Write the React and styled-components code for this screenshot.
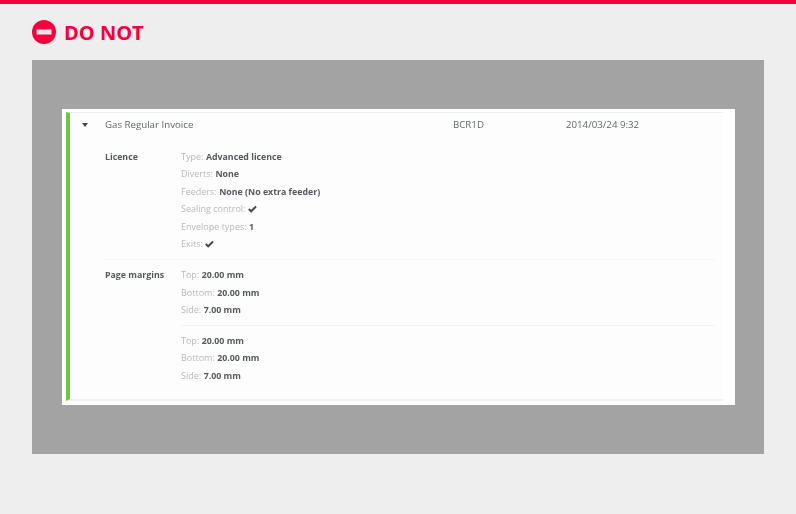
import React from "react"
import styled, { createGlobalStyle } from "styled-components"

const GlobalStyle = createGlobalStyle`
  html, body {
    margin: 0;
    padding: 0;
    background: #eeeeee;
    font-family: "Open Sans", "Liberation Sans", sans-serif;
  }
`

const Page = styled.div`
  width: 796px;
  height: 514px;
  box-sizing: border-box;
  border-top: 4px solid #f5003d;
  padding: 16px 32px 0;
  overflow: hidden;
`

const Heading = styled.div`
  display: flex;
  align-items: center;
  gap: 8px;
  height: 24px;
  margin-bottom: 16px;
  color: #f5003d;
  font-size: 20px;
  font-weight: 700;
`

const Stage = styled.div`
  height: 394px;
  box-sizing: border-box;
  background: #a3a3a3;
  padding: 49px 29px 0 30px;
`

const Shot = styled.div`
  height: 296px;
  box-sizing: border-box;
  background: #ffffff;
  padding: 3px 12px 4px 4px;
  filter: blur(0.5px);
`

const Card = styled.div`
  height: 100%;
  box-sizing: border-box;
  background: #fdfdfd;
  border-top: 1px solid #efefef;
  border-bottom: 2px solid #f1f1f1;
  border-left: 4px solid #6cc644;
  padding-left: 12px;
  color: #55595d;
  font-size: 9px;
`

const TopRow = styled.div`
  display: grid;
  grid-template-columns: 23px 348px 113px 1fr;
  align-items: center;
  height: 23px;
  font-size: 9.7px;
  color: #63676a;
`

const Caret = styled.span`
  width: 0;
  height: 0;
  margin-top: 1px;
  border-left: 3.5px solid transparent;
  border-right: 3.5px solid transparent;
  border-top: 4px solid #444;
`

const Section = styled.div`
  display: grid;
  grid-template-columns: 76px 1fr;
  margin-left: 23px;
  margin-right: 8px;
  padding: ${(p) => p.$pad};
  border-bottom: ${(p) => (p.$ruled ? "1px solid #f3f3f3" : "none")};
`

const SectionName = styled.div`
  font-size: 8.8px;
  font-weight: 700;
  line-height: 18px;
`

const Group = styled.div`
  padding: ${(p) => p.$pad};
  border-bottom: ${(p) => (p.$ruled ? "1px solid #f3f3f3" : "none")};
`

const Line = styled.div`
  display: flex;
  align-items: baseline;
  gap: 2.5px;
  height: ${(p) => p.$height}px;
  line-height: ${(p) => p.$height}px;
  white-space: pre;
`

const Label = styled.span`
  color: #b6b8ba;
`

const Value = styled.span`
  font-size: 8.8px;
  font-weight: 700;
`

const CheckIcon = styled.svg`
  align-self: center;
`

const Check = () => (
  <CheckIcon width="9" height="8" viewBox="0 0 9 8" aria-hidden="true">
    <path d="M0.8 4.1 L3.2 6.3 L8 1.5" fill="none" stroke="#45494c" strokeWidth="2" />
  </CheckIcon>
)

const licence = [
  ["Type:", "Advanced licence"],
  ["Diverts:", "None"],
  ["Feeders:", "None (No extra feeder)"],
  ["Sealing control:", null],
  ["Envelope types:", "1"],
  ["Exits:", null],
]

const margins = [
  ["Top:", "20.00 mm"],
  ["Bottom:", "20.00 mm"],
  ["Side:", "7.00 mm"],
]

const Lines = ({ rows, height }) =>
  rows.map(([label, value]) => (
    <Line key={label} $height={height}>
      <Label>{label}</Label>
      {value ? <Value>{value}</Value> : <Check />}
    </Line>
  ))

export default function App() {
  return (
    <Page>
      <GlobalStyle />
      <Heading>
        <svg width="24" height="24" viewBox="0 0 24 24" aria-hidden="true">
          <circle cx="12" cy="12" r="12" fill="#f5003d" />
          <rect x="4.5" y="9.5" width="15" height="5" fill="#f0e6e8" />
        </svg>
        DO NOT
      </Heading>
      <Stage>
        <Shot>
          <Card>
            <TopRow>
              <Caret />
              <span>Gas Regular Invoice</span>
              <span>BCR1D</span>
              <span>2014/03/24 9:32</span>
            </TopRow>
            <Section $ruled $pad="12px 0 7px">
              <SectionName>Licence</SectionName>
              <div>
                <Lines rows={licence} height={17.4} />
              </div>
            </Section>
            <Section $pad="6px 0 0">
              <SectionName>Page margins</SectionName>
              <div>
                <Group $ruled $pad="0 0 6px">
                  <Lines rows={margins} height={17.5} />
                </Group>
                <Group $pad="6px 0 0">
                  <Lines rows={margins} height={17.5} />
                </Group>
              </div>
            </Section>
          </Card>
        </Shot>
      </Stage>
    </Page>
  )
}
